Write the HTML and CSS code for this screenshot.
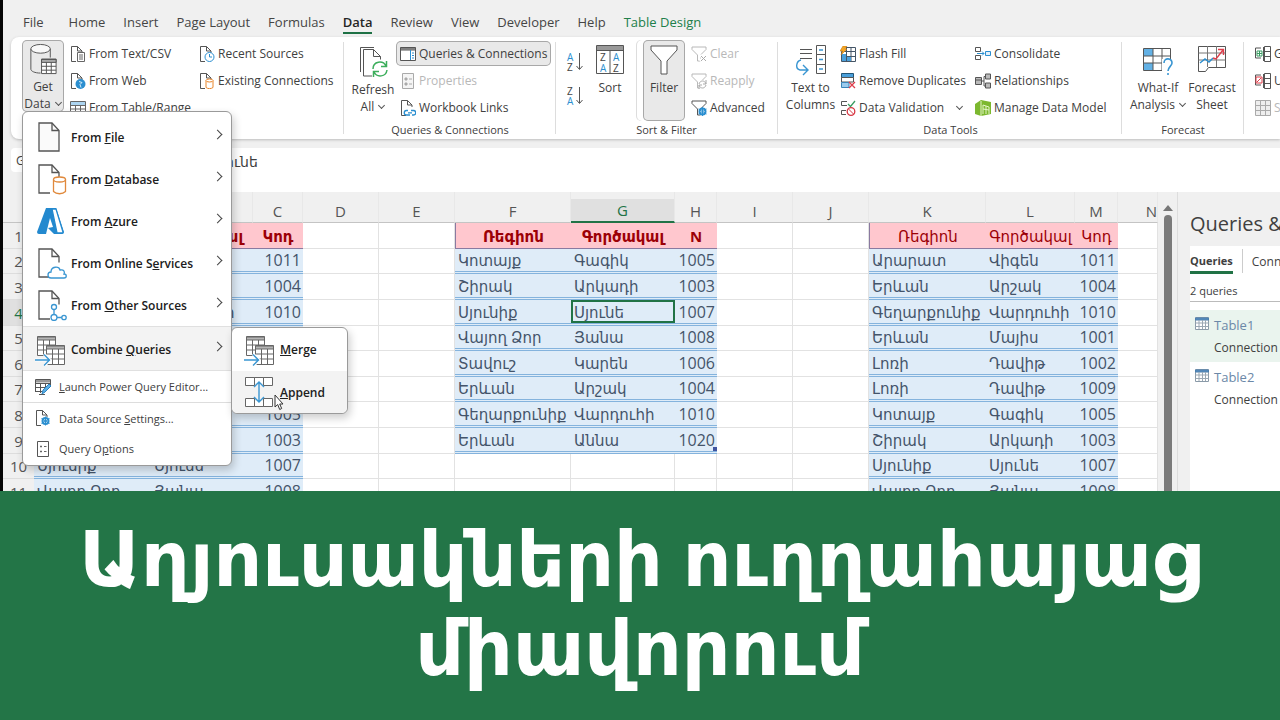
FILE: index.html
```html
<!DOCTYPE html>
<html lang="hy">
<head>
<meta charset="utf-8">
<meta name="viewport" content="width=device-width, initial-scale=1">
<title>Աղյուսակների ուղղահայաց միավորում</title>
<link rel="stylesheet" href="styles.css">
</head>
<body>
<svg class="defs" aria-hidden="true">
  <symbol id="doc" viewBox="0 0 24 32"><path d="M2 2h13l7 7.500v20.500H2z" fill="#fafafa" stroke="#555" stroke-width="1.300"/><path d="M15 2v7.500h7" fill="none" stroke="#555" stroke-width="1.300"/></symbol>
  <symbol id="docpart" viewBox="0 0 30 32"><path d="M13 30H2V2h13l7 7.500v6" fill="none" stroke="#555" stroke-width="1.300"/><path d="M15 2v7.500h7" fill="none" stroke="#555" stroke-width="1.300"/></symbol>
  <symbol id="sdoc" viewBox="0 0 16 16"><path d="M6 15.500H1.500V.5h6l4.500 4.500v2M7.500.5V5H12" fill="none" stroke="#555"/></symbol>
  <symbol id="combine" viewBox="0 0 30 32"><path d="M2.500 2.500h18v19h-18z" fill="#fff" stroke="#666"/><path d="M2.500 3h18v3h-18z" fill="#b5b5b5" stroke="#666"/><path d="M2.500 11h18M2.500 16h18M8.500 6v15M14.500 6v15" stroke="#666" fill="none"/><path d="M11.500 11.500h18v19h-18z" fill="#fff" stroke="#666"/><path d="M11.500 12h18v3h-18z" fill="#b5b5b5" stroke="#666"/><path d="M11.500 20h18M11.500 25h18M17.500 15v15M23.500 15v15" stroke="#666"/><path d="M0 26h15M9 20l6 6-6 6" fill="none" stroke="#fff" stroke-width="3"/><path d="M0 26h15M9 20.500l5.500 5.500-5.500 5.500" fill="none" stroke="#3a96d2" stroke-width="1.400"/></symbol>
  <symbol id="filter" viewBox="0 0 16 16"><path d="M1 1h14v2.500L9.500 9v6h-3V9L1 3.500z" fill="none" stroke="currentColor"/></symbol>
</svg>

<main class="app">
  <nav class="tabs" aria-label="Ribbon tabs">
    <a href="#" class="file">File</a><a href="#">Home</a><a href="#">Insert</a><a href="#">Page Layout</a><a href="#">Formulas</a><a href="#" class="current">Data</a><a href="#">Review</a><a href="#">View</a><a href="#">Developer</a><a href="#">Help</a><a href="#" class="context">Table Design</a>
  </nav>

  <section class="ribbon" aria-label="Data">
    <div class="group g-get">
      <div class="tools">
        <button class="big pressed getdata"><svg width="28" height="34" viewBox="0 0 28 34"><path d="M1.500 6v21c0 2 4 4 10 4M21.500 6v9" fill="none" stroke="#555"/><ellipse cx="11.500" cy="6" rx="10" ry="4.500" fill="#f8f8f8" stroke="#555"/><path d="M12.500 16.500h15v15h-15z" fill="#fff" stroke="#555"/><path d="M12.500 17h15v3h-15z" fill="#aaa" stroke="#555"/><path d="M12.500 24h15M12.500 28h15M17.500 20v11M22.500 20v11" stroke="#555"/></svg><span>Get</span><span>Data <i class="chev"></i></span></button>
        <div class="col col-text">
          <button><svg viewBox="0 0 16 16"><use href="#sdoc"/><path d="M7.500 6.500h7v9h-7z" fill="#fff" stroke="#666"/><path d="M9 9h4M9 11h4M9 13h4" stroke="#666"/></svg>From Text/CSV</button>
          <button><svg viewBox="0 0 16 16"><use href="#sdoc"/><circle cx="10.500" cy="11" r="5" fill="#2b8fd0"/><path d="M9 8.500l3 1-2 2 1 3" stroke="#d5ecfa" fill="none"/></svg>From Web</button>
          <button><svg viewBox="0 0 16 16"><path d="M.5 1.500h15v14H.5z" fill="#fff" stroke="#666"/><path d="M1 2h14v3H1z" fill="#acd4f0"/><path d="M.5 5.500h15M.5 9h15M.5 12h15M5.500 5v10M10.500 5v10" stroke="#666"/></svg>From Table/Range</button>
        </div>
        <div class="col">
          <button><svg viewBox="0 0 16 16"><use href="#sdoc"/><circle cx="10.500" cy="11" r="4.500" fill="#fff" stroke="#2b8fd0"/><path d="M10.500 8v3h2.500" stroke="#2b8fd0" fill="none"/></svg>Recent Sources</button>
          <button><svg viewBox="0 0 16 16"><use href="#sdoc"/><path d="M7 7.500v7c2 1.500 5 1.500 7 0v-7" fill="#fff" stroke="#e8862b"/><ellipse cx="10.500" cy="7.500" rx="3.500" ry="1.500" fill="#fff" stroke="#e8862b"/></svg>Existing Connections</button>
        </div>
      </div>
    </div>
    <div class="group g-query">
      <div class="tools">
        <button class="big refresh"><svg width="30" height="34" viewBox="0 0 30 34"><path d="M2.500 27V2.500H16" fill="none" stroke="#555"/><path d="M14 31H5.500V4.500h10l7 7v3M15.500 4.500v7h7" fill="none" stroke="#555"/><path d="M15 24c0-8 10-9 13-3M28.500 16v5.500H23M29 25c-1 7-10 8-13 2M15.500 32v-5.500H21" fill="none" stroke="#3dae5c" stroke-width="1.500"/></svg><span>Refresh</span><span>All <i class="chev"></i></span></button>
        <div class="col">
          <button class="pressed"><svg viewBox="0 0 16 16"><path d="M.5 1.500h15v13H.5z" fill="#fff" stroke="#555"/><path d="M.5 2h15v2H.5z" fill="#aaa" stroke="#555"/><path d="M10.500 4v10" stroke="#2b8fd0"/><path d="M12 7h2M12 9.500h2M12 12h2" stroke="#2b8fd0"/></svg>Queries &amp; Connections</button>
          <button disabled><svg viewBox="0 0 16 16"><path d="M2.500.5h11v15h-11z" fill="#f5f5f5" stroke="#aaa"/><path d="M5 5h2v2H5zM5 10h2v2H5zM9 6h3M9 11h3" stroke="#aaa" fill="#aaa"/></svg>Properties</button>
          <button><svg viewBox="0 0 16 16"><use href="#sdoc"/><path d="M8 10.500H6.500a2 2 0 000 4.500H10M11 10.500h2.500a2 2 0 010 4.500H12M8 12.800h4" stroke="#2b8fd0" fill="none" stroke-width="1.300"/></svg>Workbook Links</button>
        </div>
      </div>
      <div class="caption">Queries &amp; Connections</div>
    </div>
    <div class="group g-sort">
      <div class="tools">
        <div class="col az">
          <button aria-label="Sort A to Z"><svg viewBox="0 0 16 22"><text x="0" y="10" class="t-blue">A</text><text x="0" y="20" class="t-dark">Z</text><path d="M12.500 2v16M9.500 15l3 3.500 3-3.500" fill="none" stroke="#555"/></svg></button>
          <button aria-label="Sort Z to A"><svg viewBox="0 0 16 22"><text x="0" y="10" class="t-dark">Z</text><text x="0" y="20" class="t-blue">A</text><path d="M12.500 2v16M9.500 15l3 3.500 3-3.500" fill="none" stroke="#555"/></svg></button>
        </div>
        <button class="big sort"><svg width="28" height="34" viewBox="0 0 28 34"><path d="M.5 2.500h27v28H.5z" fill="#fff" stroke="#555"/><path d="M1 3h26v4H1z" fill="#999"/><path d="M.5 7.500h27M14 7v23" stroke="#555"/><text x="4" y="18" class="t-dark">Z</text><text x="4" y="29" class="t-blue">A</text><text x="17" y="18" class="t-blue">A</text><text x="17" y="29" class="t-dark">Z</text></svg><span>Sort</span></button>
        <button class="big pressed filter"><svg width="28" height="34" viewBox="0 0 28 34"><path d="M1 3h26v4L17 18v13h-6V18L1 7z" fill="#fff" stroke="#555"/></svg><span>Filter</span></button>
        <div class="col">
          <button disabled><svg viewBox="0 0 16 16"><use href="#filter"/><path d="M9 9l6 6M15 9l-6 6" stroke="#fff" stroke-width="3"/><path d="M10 10l5 5M15 10l-5 5" stroke="#aaa"/></svg>Clear</button>
          <button disabled><svg viewBox="0 0 16 16"><use href="#filter"/><circle cx="11.500" cy="11.500" r="4.500" fill="#fff"/><path d="M8 11c1-4 6-4 7 0M15 7v4h-3M15 12c-1 4-6 4-7 0M8 16v-4h3" fill="none" stroke="#aaa"/></svg>Reapply</button>
          <button><svg viewBox="0 0 16 16"><use href="#filter"/><circle cx="11.500" cy="11.500" r="3" fill="#fff" stroke="#2b8fd0" stroke-width="2"/><path d="M11.500 7v9M7.500 9l8 5M7.500 14l8-5" stroke="#2b8fd0"/></svg>Advanced</button>
        </div>
      </div>
      <div class="caption">Sort &amp; Filter</div>
    </div>
    <div class="group g-data">
      <div class="tools">
        <button class="big columns"><svg width="30" height="34" viewBox="0 0 30 34"><path d="M4 6.500h12M4 10.500h12M4 15.500h12" stroke="#555"/><path d="M20.500 2.500h9v9h-9zM20.500 11.500h9v10h-9zM20.500 21.500h9v9h-9z" fill="#fff" stroke="#555"/><path d="M23 7h4M23 16.500h4M23 26h4M5 17C0 18-1 26 4 27h8M7 22l5 5-5 5" fill="none" stroke="#3a96d2" stroke-width="1.400"/></svg><span>Text to</span><span>Columns</span></button>
        <div class="col col-fill">
          <button><svg viewBox="0 0 16 16"><path d="M1.500 5.500h14v10h-14zM6.500 1v14.500M11 1v14.500M1.500 10.500h14M6 1.500h9.500v4" fill="#fff" stroke="#456"/><path d="M2 8h4v7H2zM7 11h4v4H7z" fill="#4a9fda"/><path d="M3 0h4L5 3h2L1 9l1.500-4H0z" fill="#f5a623" stroke="#b96f10" stroke-width=".5"/></svg>Flash Fill</button>
          <button><svg viewBox="0 0 16 16"><path d="M1.500.5h12v4h-12z" fill="#4a9fda" stroke="#257"/><path d="M1.500 4.500h12V9h-12z" fill="#fff" stroke="#555"/><path d="M1.500 9.500H9v5H1.500z" fill="#9ccbed" stroke="#3a85b8"/><path d="M9 9l6 6M15 9l-6 6" stroke="#df3e4b" stroke-width="1.300"/></svg>Remove Duplicates</button>
          <button><svg viewBox="0 0 16 16"><path d="M7 1.500H1.500v4H7M6 10.500H1.500v4H6" fill="none" stroke="#555"/><path d="M8 4l2.500 2.500L15 1" fill="none" stroke="#3a9d62" stroke-width="1.300"/><circle cx="11" cy="11.500" r="3.800" fill="#fff" stroke="#d73743" stroke-width="1.300"/><path d="M8.500 9l5 5" stroke="#d73743"/></svg>Data Validation <i class="chev far"></i></button>
        </div>
        <div class="col">
          <button><svg viewBox="0 0 16 16"><path d="M.5 1.500h5v4h-5zM.5 9.500h5v4h-5z" fill="#fff" stroke="#555"/><path d="M10.500 5.500h5v4h-5z" fill="#e2f0fb" stroke="#2b8fd0"/><path d="M2 7.500h7M7 5.500l2 2-2 2" stroke="#2b8fd0" fill="none"/></svg>Consolidate</button>
          <button><svg viewBox="0 0 16 16"><path d="M.5 4.500h6v7h-6zM10.500 1h5v5h-5zM10.500 10h5v5h-5z" fill="#bbb" stroke="#555"/><path d="M7 8h2V3.500h1.500M9 8v5h1.500M1 7h5" stroke="#555" fill="none"/></svg>Relationships</button>
          <button><svg viewBox="0 0 16 16"><path d="M0 4l6-4 10 2v12l-10 2-6-2z" fill="#7cb82f"/><path d="M6 1v15M8 14V5l6 2v7M8 9l6 1M11 6v8" stroke="#e4f5c8" fill="none"/></svg>Manage Data Model</button>
        </div>
      </div>
      <div class="caption">Data Tools</div>
    </div>
    <div class="group g-forecast">
      <div class="tools">
        <button class="big whatif"><svg width="30" height="34" viewBox="0 0 30 34"><path d="M.5 5.500h27v22H.5z" fill="#fff" stroke="#555"/><path d="M1 6h9v7H1zM1 20h9v7H1z" fill="#63b1e5"/><path d="M.5 13h27M.5 20h27M10 5v22M19 5v22" stroke="#555"/><path d="M19 16h11v17H19z" fill="#fff"/><path d="M21 20c0-6 8-5 8 0 0 3-4 4-4 8M25 30v2" stroke="#3a96d2" stroke-width="1.600" fill="none"/></svg><span>What-If</span><span>Analysis <i class="chev"></i></span></button>
        <button class="big sheet"><svg width="30" height="34" viewBox="0 0 30 34"><path d="M1.500 3.500h27v21h-17l-3 4h-7z" fill="#fff" stroke="#555"/><path d="M1.500 10h27M1.500 17h27M10.500 3v21M19.500 3v21" stroke="#777"/><path d="M3 20l5-4 4 3 4-4" stroke="#2b8fd0" stroke-width="1.400" fill="none"/><path d="M16 15l3 1 7-9M21 6.500h5.500V12" stroke="#df3e4b" stroke-width="1.400" fill="none"/></svg><span>Forecast</span><span>Sheet</span></button>
      </div>
      <div class="caption">Forecast</div>
    </div>
    <div class="group g-outline">
      <div class="tools"><div class="col">
        <button><svg viewBox="0 0 16 16"><path d="M8.500 1v14M9.500.5h6v15h-6zM9.500 5.500h6M9.500 10.500h6M6 2H.5v10H6" fill="none" stroke="#555"/><path d="M2 5h5v5H2zM4.500 5v5M2 7.500h5" fill="none" stroke="#3a9d62"/></svg>Group</button>
        <button><svg viewBox="0 0 16 16"><path d="M8.500 1v14M9.500.5h6v15h-6zM9.500 5.500h6M9.500 10.500h6M6 2H.5v10H6" fill="none" stroke="#555"/><path d="M1 4h6v6H1zM2 9l4-4" fill="#fff" stroke="#df3e4b"/></svg>Ungroup</button>
        <button disabled><svg viewBox="0 0 16 16"><path d="M.5.5h15v15H.5zM.5 5.500h15M.5 10.500h15M5.500.5v15M10.500.5v15" fill="#eee" stroke="#aaa"/></svg>Subtotal</button>
      </div></div>
    </div>
  </section>

  <div class="formulabar">
    <input class="namebox" aria-label="Name box" value="G4">
    <input class="formula" aria-label="Formula bar" value="Սյունե">
  </div>

  <div class="workspace">
    <div class="grid">
      <table>
        <colgroup><col class="c-n"><col class="c-a"><col class="c-b"><col class="c-c"><col class="c-d"><col class="c-d"><col class="c-f"><col class="c-g"><col class="c-h"><col class="c-d"><col class="c-d"><col class="c-k"><col class="c-l"><col class="c-m"><col></colgroup>
        <thead><tr><th></th><th>A</th><th>B</th><th>C</th><th>D</th><th>E</th><th>F</th><th class="active">G</th><th>H</th><th>I</th><th>J</th><th>K</th><th>L</th><th>M</th><th class="last">N</th></tr></thead>
        <tbody>
        <tr><th>1</th><td class="h">Ռեգիոն</td><td class="h">Գործակալ</td><td class="h">Կոդ</td><td></td><td></td><td class="h first">Ռեգիոն</td><td class="h">Գործակալ</td><td class="h">N</td><td></td><td></td><td class="h r first">Ռեգիոն</td><td class="h r">Գործակալ</td><td class="h r">Կոդ</td><td></td></tr>
        <tr><th>2</th><td class="d">Արարատ</td><td class="d">Վիգեն</td><td class="d n">1011</td><td></td><td></td><td class="d">Կոտայք</td><td class="d">Գագիկ</td><td class="d n">1005</td><td></td><td></td><td class="d">Արարատ</td><td class="d">Վիգեն</td><td class="d n">1011</td><td></td></tr>
        <tr><th>3</th><td class="d">Երևան</td><td class="d">Արշակ</td><td class="d n">1004</td><td></td><td></td><td class="d">Շիրակ</td><td class="d">Արկադի</td><td class="d n">1003</td><td></td><td></td><td class="d">Երևան</td><td class="d">Արշակ</td><td class="d n">1004</td><td></td></tr>
        <tr><th class="active">4</th><td class="d">Գեղարքունիք</td><td class="d">Վարդուհի</td><td class="d n">1010</td><td></td><td></td><td class="d">Սյունիք</td><td class="d selected">Սյունե</td><td class="d n">1007</td><td></td><td></td><td class="d">Գեղարքունիք</td><td class="d">Վարդուհի</td><td class="d n">1010</td><td></td></tr>
        <tr><th>5</th><td class="d">Երևան</td><td class="d">Մայիս</td><td class="d n">1001</td><td></td><td></td><td class="d">Վայող Ձոր</td><td class="d">Յանա</td><td class="d n">1008</td><td></td><td></td><td class="d">Երևան</td><td class="d">Մայիս</td><td class="d n">1001</td><td></td></tr>
        <tr><th>6</th><td class="d">Լոռի</td><td class="d">Դավիթ</td><td class="d n">1002</td><td></td><td></td><td class="d">Տավուշ</td><td class="d">Կարեն</td><td class="d n">1006</td><td></td><td></td><td class="d">Լոռի</td><td class="d">Դավիթ</td><td class="d n">1002</td><td></td></tr>
        <tr><th>7</th><td class="d">Լոռի</td><td class="d">Դավիթ</td><td class="d n">1009</td><td></td><td></td><td class="d">Երևան</td><td class="d">Արշակ</td><td class="d n">1004</td><td></td><td></td><td class="d">Լոռի</td><td class="d">Դավիթ</td><td class="d n">1009</td><td></td></tr>
        <tr><th>8</th><td class="d">Կոտայք</td><td class="d">Գագիկ</td><td class="d n">1005</td><td></td><td></td><td class="d">Գեղարքունիք</td><td class="d">Վարդուհի</td><td class="d n">1010</td><td></td><td></td><td class="d">Կոտայք</td><td class="d">Գագիկ</td><td class="d n">1005</td><td></td></tr>
        <tr><th>9</th><td class="d">Շիրակ</td><td class="d">Արկադի</td><td class="d n">1003</td><td></td><td></td><td class="d">Երևան</td><td class="d">Աննա</td><td class="d n end">1020</td><td></td><td></td><td class="d">Շիրակ</td><td class="d">Արկադի</td><td class="d n">1003</td><td></td></tr>
        <tr><th>10</th><td class="d">Սյունիք</td><td class="d">Սյունե</td><td class="d n">1007</td><td></td><td></td><td></td><td></td><td></td><td></td><td></td><td class="d">Սյունիք</td><td class="d">Սյունե</td><td class="d n">1007</td><td></td></tr>
        <tr><th>11</th><td class="d">Վայող Ձոր</td><td class="d">Յանա</td><td class="d n">1008</td><td></td><td></td><td></td><td></td><td></td><td></td><td></td><td class="d">Վայող Ձոր</td><td class="d">Յանա</td><td class="d n">1008</td><td></td></tr>
        </tbody>
      </table>
    </div>
    <div class="scroll"><span class="up"></span><span class="thumb"></span></div>
    <aside class="pane">
      <h2>Queries &amp; Connections</h2>
      <div class="pane-body">
        <div class="pane-tabs"><button class="on">Queries</button><button>Connections</button></div>
        <p class="count">2 queries</p>
        <div class="query sel"><svg width="14" height="14" viewBox="0 0 14 14"><path d="M.5.5h13v12H.5z" fill="#fff" stroke="#8a9aa8"/><path d="M.5 1h13v2H.5z" fill="#5b8fc0" stroke="#4a7fae"/><path d="M.5 6h13M.5 9.500h13M4 3v9M7.500 3v9M10.500 3v9" stroke="#9ba8b3"/></svg><div><b>Table1</b><span>Connection only.</span></div></div>
        <div class="query"><svg width="14" height="14" viewBox="0 0 14 14"><path d="M.5.5h13v12H.5z" fill="#fff" stroke="#8a9aa8"/><path d="M.5 1h13v2H.5z" fill="#5b8fc0" stroke="#4a7fae"/><path d="M.5 6h13M.5 9.500h13M4 3v9M7.500 3v9M10.500 3v9" stroke="#9ba8b3"/></svg><div><b>Table2</b><span>Connection only.</span></div></div>
      </div>
    </aside>
  </div>

  <div class="menu">
    <button class="item"><svg width="24" height="32"><use href="#doc"/></svg><span>From <u>F</u>ile</span><i class="arrow"></i></button>
    <button class="item"><svg width="30" height="32" viewBox="0 0 30 32"><use href="#docpart"/><path d="M16.500 16.500v12c3 3 9 3 12 0v-12" fill="#fff" stroke="#e0893c" stroke-width="1.300"/><ellipse cx="22.500" cy="16.500" rx="6" ry="2.500" fill="#fff" stroke="#e0893c" stroke-width="1.300"/></svg><span>From <u>D</u>atabase</span><i class="arrow"></i></button>
    <button class="item"><svg width="28" height="32" viewBox="0 0 28 32"><path d="M9 3h10l8 24q0 2-2 2h-8l-6-6 5-1-3-9-4 16H2q-2 0-2-2z" fill="#2389cf"/><path d="M15 4h4l7 23q0 1-1 1h-5z" fill="#fff" stroke="#2389cf" stroke-width="1.300"/></svg><span>From <u>A</u>zure</span><i class="arrow"></i></button>
    <button class="item"><svg width="30" height="32" viewBox="0 0 30 32"><use href="#docpart"/><path d="M14 31c-4 0-4-6 0-6 0-6 8-6 9-2 4-1 5 2 4 4 3 0 3 4 0 4z" fill="#fff" stroke="#3a96d2" stroke-width="1.300"/></svg><span>From Online S<u>e</u>rvices</span><i class="arrow"></i></button>
    <button class="item"><svg width="30" height="32" viewBox="0 0 30 32"><use href="#docpart"/><g fill="#fff" stroke="#3a96d2" stroke-width="1.300"><path d="M17 20v6M20 28.500h5"/><circle cx="17" cy="18" r="2.500"/><circle cx="17" cy="28.500" r="3"/><circle cx="27" cy="28.500" r="2.200"/></g></svg><span>From <u>O</u>ther Sources</span><i class="arrow"></i></button>
    <button class="item hover"><svg width="30" height="32"><use href="#combine"/></svg><span>Combine <u>Q</u>ueries</span><i class="arrow"></i></button>
    <button class="item small"><svg width="16" height="16" viewBox="0 0 16 16"><path d="M10 15.500H4M.5 13V.5h15V6M.5 4.500h15M.5 8.500h10M.5 12.500h7M5.500 4v10M10.500 4v5" fill="none" stroke="#555"/><path d="M1 1h14v2.500H1z" fill="#999"/><path d="M7 15l1-4 6-6 2 2-6 6z" fill="#5db0e6" stroke="#2b84c2"/></svg><span><u>L</u>aunch Power Query Editor...</span></button>
    <button class="item small split"><svg width="16" height="16" viewBox="0 0 16 16"><use href="#sdoc"/><circle cx="10.500" cy="11" r="3" fill="#fff" stroke="#2b8fd0" stroke-width="2"/><path d="M10.500 6.500v9M6.500 8.500l8 5M6.500 13.500l8-5" stroke="#2b8fd0"/></svg><span>Data Source <u>S</u>ettings...</span></button>
    <button class="item small"><svg width="16" height="16" viewBox="0 0 16 16"><path d="M2.500.5h11v15h-11z" fill="#fff" stroke="#555"/><path d="M5.500 5h1v1h-1zM5.500 10h1v1h-1zM9 5.500h2.500M9 10.500h2.500" stroke="#666" fill="#666"/></svg><span>Query O<u>p</u>tions</span></button>
  </div>

  <div class="menu submenu">
    <button class="item"><svg width="30" height="32"><use href="#combine"/></svg><span><u>M</u>erge</span></button>
    <button class="item hover"><svg width="30" height="32" viewBox="0 0 30 32"><path d="M1.500 1.500h9v8h-9zM10.500 1.500h9v8h-9zM19.500 1.500h9v8h-9zM1.500 22.500h9v8h-9zM10.500 22.500h9v8h-9zM19.500 22.500h9v8h-9z" fill="#fff" stroke="#666"/><path d="M15 7v18" stroke="#f3f3f3" stroke-width="8"/><path d="M15 6v20M10 11l5-5 5 5M10 21l5 5 5-5" fill="none" stroke="#3a96d2" stroke-width="1.400"/></svg><span><u>A</u>ppend</span></button>
  </div>
  <svg class="cursor" width="10" height="17" viewBox="0 0 10 17"><path d="M1 1v12l2.700-2.500 2 5 2-1-2-4.500H9z" fill="#fff" stroke="#333"/></svg>
</main>

<header class="banner"><h1>Աղյուսակների ուղղահայաց միավորում</h1></header>
</body>
</html>
```
FILE: styles.css
```css
* { box-sizing: border-box; }
body {
  margin: 0;
  height: 100vh;
  display: flex;
  flex-direction: column;
  font-family: "Open Sans", "Noto Sans", "DejaVu Sans", sans-serif;
  font-size: 12px;
  color: #404040;
  overflow: hidden;
}
button, input { font: inherit; color: inherit; border: 0; background: none; padding: 0; margin: 0; }
.defs { position: absolute; width: 0; height: 0; }

.app {
  position: relative;
  flex: 1;
  min-height: 0;
  overflow: hidden;
  display: flex;
  flex-direction: column;
  background: #f0f0f0;
  border-left: 3px solid #050505;
}

.tabs { display: flex; flex: none; gap: 18px; height: 37px; padding: 12px 0 0 20px; font-size: 13px; }
.tabs a { color: #454545; text-decoration: none; line-height: 20px; height: 22px; white-space: nowrap; }
.tabs .file { margin-right: 7px; }
.tabs .current { font-weight: 600; color: #262626; border-bottom: 2px solid #1e7145; }
.tabs .context { color: #217f4b; }

.ribbon {
  display: flex;
  flex: none;
  height: 102px;
  margin-left: 8px;
  background: #fff;
  border-radius: 8px 0 0 8px;
  box-shadow: 0 1px 3px #bbb;
  overflow: hidden;
}
.group { position: relative; flex: none; display: flex; flex-direction: column; padding: 3px 0 0 11px; }
.group::after { content: ""; position: absolute; right: 0; top: 5px; bottom: 5px; border-right: 1px solid #ddd; }
.g-get { width: 333px; }
.g-query { width: 212px; padding-left: 8px; }
.g-sort { width: 222px; padding-left: 7px; }
.g-data { width: 344px; padding-left: 9px; }
.g-forecast { width: 122px; padding-left: 8px; }
.g-outline { padding-left: 5px; }
.tools { display: flex; height: 82px; }
.caption { text-align: center; font-size: 11px; line-height: 16px; margin-left: -8px; }
.big { display: flex; flex-direction: column; align-items: center; justify-content: flex-start; padding-top: 3px; line-height: 17px; white-space: nowrap; flex: none; }
.big svg { margin-bottom: 2px; }
.pressed { background: #e9e9e9; border-radius: 5px; box-shadow: inset 0 0 0 1px #a8a8a8; }
.getdata { width: 42px; height: 72px; }
.refresh { width: 42px; padding-top: 5px; }
.sort { width: 44px; margin-right: 11px; }
.filter { width: 42px; height: 81px; box-shadow: inset 0 0 0 1px #a8a8a8, -6px 0 0 #fff, -7px 0 0 #ddd; }
.columns { width: 47px; }
.whatif { width: 56px; }
.sheet { width: 52px; }
.col { display: flex; flex-direction: column; gap: 2px; padding-top: 1px; margin-left: 2px; }
.col button { display: flex; align-items: center; gap: 3px; height: 25px; padding: 0 4px; white-space: nowrap; }
.col svg { width: 16px; height: 16px; flex: none; color: #555; }
.col button:disabled, .col button:disabled svg { color: #b8b8b8; }
.col-text { width: 127px; }
.col-fill { width: 133px; }
.col.az { width: 25px; gap: 9px; padding-top: 9px; margin-left: 0; }
.col.az svg { height: 22px; overflow: visible; }
.t-blue, .t-dark { font: 10px "Open Sans", sans-serif; fill: #2b8fd0; }
.t-dark { fill: #444; }
.chev { display: inline-block; width: 5px; height: 5px; margin: 0 1px 3px 2px; border: solid #555; border-width: 0 1px 1px 0; transform: rotate(45deg); }
.chev.far { margin-left: 10px; }

.formulabar { flex: none; display: flex; gap: 12px; height: 53px; padding: 9px 0 0 8px; }
.namebox { width: 120px; height: 24px; padding-left: 5px; background: #fff; border-radius: 4px; }
.formula { flex: 1; min-width: 0; padding: 0 0 18px 68px; background: #fff; font-size: 14px; }

.workspace { flex: 1; min-height: 0; display: flex; }
.grid { flex: 1; min-width: 0; overflow: hidden; background: #fff; }
table { width: 100%; table-layout: fixed; border-collapse: separate; border-spacing: 0; font-size: 16px; color: #44546a; }
.c-n { width: 31px; }
.c-a { width: 117px; }
.c-b { width: 102px; }
.c-c { width: 50px; }
.c-d { width: 76px; }
.c-f { width: 116px; }
.c-g { width: 104px; }
.c-h { width: 42px; }
.c-k { width: 117px; }
.c-l { width: 89px; }
.c-m { width: 43px; }
th { font-weight: 400; font-size: 15px; color: #555; background: #f0f0f0; padding: 0; text-align: center; }
thead th { height: 31px; padding-top: 7px; border-bottom: 1px solid #c4c4c4; border-right: 1px solid #e8e8e8; }
thead .active { background: linear-gradient(#f0f0f0 7px, #e0e0e0 7px); color: #217346; border-bottom: 2px solid #217346; }
thead .last { text-align: right; }
tbody th { border-bottom: 1px solid #ddd; }
tbody .active { color: #217346; background: #e0e0e0; }
tbody tr { height: 26px; }
tbody tr:nth-child(5n + 2), tbody tr:nth-child(5n + 5) { height: 25px; }
td { height: inherit; padding: 0 3px; line-height: 20px; white-space: nowrap; overflow: hidden; border-right: 1px solid #e2e2e2; border-bottom: 1px solid #e2e2e2; }
.h { background: #ffc7ce; color: #9c0006; font-weight: 700; font-size: 15px; text-align: center; border-right: 0; border-bottom: 1px solid #8a7aa0; padding: 0; }
.h.first { border-left: 1px solid #8a7aa0; }
.h.r { font-weight: 400; }
.d { background: #dfecf8; border-right: 0; border-bottom: 3px double #84b3dd; font-size: 15px; }
.n { text-align: right; font-size: 16px; padding-right: 2px; }
.selected { box-shadow: inset 0 0 0 2px #217346; }
.end { background: linear-gradient(#4054a0, #4054a0) right bottom / 4px 4px no-repeat #dfecf8; }

.scroll { flex: none; width: 20px; display: flex; flex-direction: column; align-items: center; padding-top: 13px; border-right: 1px solid #ddd; gap: 4px; }
.up { border: 5px solid transparent; border-top: 0; border-bottom: 6px solid #777; }
.thumb { flex: 1; width: 8px; border-radius: 4px 4px 0 0; background: #7b7b7b; }
.pane { flex: none; width: 102px; padding-left: 12px; overflow: hidden; white-space: nowrap; }
.pane h2 { margin: 0; padding-top: 15px; height: 54px; font-weight: 400; font-size: 20px; line-height: 34px; }
.pane-body { background: #fff; height: 100%; }
.pane-tabs { display: flex; gap: 9px; height: 32px; padding-top: 3px; }
.pane-tabs button { height: 24px; flex: none; font-size: 11px; }
.pane-tabs .on { font-weight: 700; height: 25px; border-bottom: 3px solid #217346; }
.pane-tabs button + button { border-left: 1px solid #ccc; padding-left: 9px; font-size: 12px; }
.count { margin: 0 0 8px; height: 24px; line-height: 26px; font-size: 11px; border-bottom: 1px solid #bbb; }
.query { display: flex; gap: 5px; height: 52px; padding: 7px 0 0 5px; }
.query svg { flex: none; }
.query b, .query span { display: block; font-weight: 400; line-height: 16px; }
.query b { font-size: 13px; color: #6c88a8; margin-bottom: 7px; }
.sel { background: #eaf4ee; }

.menu {
  position: absolute;
  left: 19px;
  top: 111px;
  width: 210px;
  padding: 4px 0 1px;
  background: #fff;
  border: 1px solid #9a9a9a;
  border-radius: 6px;
  box-shadow: 2px 4px 8px #0003;
}
.item { display: flex; align-items: center; width: 100%; height: 42px; padding-left: 14px; text-align: left; font-weight: 600; color: #202020; white-space: nowrap; }
.item svg { flex: none; }
.item span { position: absolute; left: 48px; }
.item .arrow { margin: 0 10px 6px auto; width: 7px; height: 7px; border: solid #444; border-width: 1px 1px 0 0; transform: rotate(45deg); }
.menu .hover { background: #f3f3f3; height: 45px; padding-top: 2px; padding-left: 12px; border: solid #e0e0e0; border-width: 1px 0; }
.item.small { height: 31px; padding-left: 12px; font-size: 11px; font-weight: 400; color: #404040; }
.item.small span { left: 36px; }
.item.split { border-top: 1px solid #ddd; }
.submenu { left: 228px; top: 327px; width: 117px; padding: 0; }
.submenu .item { height: 43px; padding-left: 12px; }
.submenu .hover { height: 42px; padding-top: 0; border: 0; border-radius: 0 0 6px 6px; }
.cursor { position: absolute; left: 271px; top: 394px; }

.banner { flex: none; display: flex; align-items: center; justify-content: center; height: 229px; padding: 0 64px 10px; background: #237547; }
.banner h1 { margin: 0; color: #fff; font-size: 76px; line-height: 89px; font-weight: 700; text-align: center; font-family: "Noto Sans", "DejaVu Sans", sans-serif; }
```
